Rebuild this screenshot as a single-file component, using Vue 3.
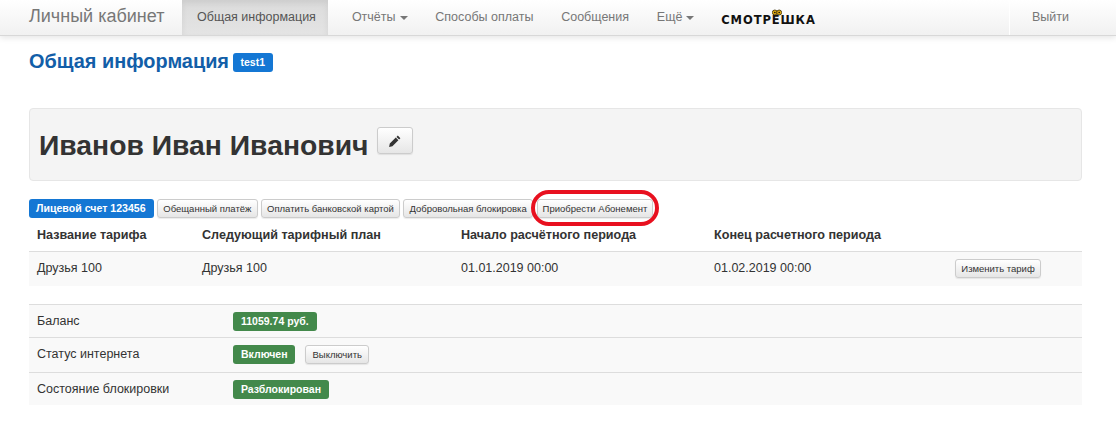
<script setup>
const tariffHead = ['Название тарифа', 'Следующий тарифный план', 'Начало расчётного периода', 'Конец расчетного периода', '']
const tariffRow = ['Друзья 100', 'Друзья 100', '01.01.2019 00:00', '01.02.2019 00:00']
const actions = ['Обещанный платёж', 'Оплатить банковской картой', 'Добровольная блокировка']
</script>

<template>
  <div class="page">
    <nav class="navbar">
      <a class="brand">Личный кабинет</a>
      <a class="nav-item active">Общая информация</a>
      <a class="nav-item">Отчёты <i class="caret"></i></a>
      <a class="nav-item">Способы оплаты</a>
      <a class="nav-item">Сообщения</a>
      <a class="nav-item">Ещё <i class="caret"></i></a>
      <a class="logo">СМОТР<span class="logo-o">Ё<svg class="eyes" width="10" height="7" viewBox="0 0 12 8"><circle cx="3.4" cy="4" r="3" fill="#e0ab12" stroke="#3a2c05"/><circle cx="8.6" cy="4" r="3" fill="#e0ab12" stroke="#3a2c05"/><circle cx="3.4" cy="4" r="1" fill="#111"/><circle cx="8.6" cy="4" r="1" fill="#111"/></svg></span>ШКА</a>
      <a class="logout">Выйти</a>
    </nav>

    <main class="content">
      <h2 class="title">Общая информация <span class="badge blue title-badge">test1</span></h2>

      <section class="jumbotron">
        <h1 class="name">Иванов Иван Иванович</h1>
        <button class="btn edit" aria-label="Изменить">
          <svg width="14" height="14" viewBox="0 0 14 14"><path d="M9.8 1.6l2.6 2.6-1.3 1.3-2.6-2.6zM7.8 3.6l2.6 2.6-6 6-3.3.7.7-3.3z" fill="#333"/></svg>
        </button>
      </section>

      <div class="actions">
        <span class="badge blue account">Лицевой счет 123456</span>
        <button v-for="a in actions" :key="a" class="btn small">{{ a }}</button>
        <span class="marked">
          <button class="btn small">Приобрести Абонемент</button>
          <span class="ring"></span>
        </span>
      </div>

      <div class="tariff head">
        <div v-for="(h, i) in tariffHead" :key="i" class="cell">{{ h }}</div>
      </div>
      <div class="tariff row">
        <div v-for="(c, i) in tariffRow" :key="i" class="cell">{{ c }}</div>
        <div class="cell"><button class="btn small change">Изменить тариф</button></div>
      </div>

      <div class="info">
        <div class="info-row">
          <div class="label">Баланс</div>
          <div class="value"><span class="badge green">11059.74 руб.</span></div>
        </div>
        <div class="info-row tall">
          <div class="label">Статус интернета</div>
          <div class="value"><span class="badge green">Включен</span><button class="btn small off">Выключить</button></div>
        </div>
        <div class="info-row">
          <div class="label">Состояние блокировки</div>
          <div class="value"><span class="badge green">Разблокирован</span></div>
        </div>
      </div>
    </main>
  </div>
</template>

<style>
html, body { margin: 0; background: #fff; }
</style>

<style scoped>
.page {
  width: 1116px;
  height: 437px;
  overflow: hidden;
  font-family: "Liberation Sans", Arial, sans-serif;
  font-size: 12.5px;
  color: #333;
  background: #fff;
}
.navbar {
  height: 35px;
  display: flex;
  align-items: stretch;
  background: linear-gradient(to bottom, #fff 0%, #f1f1f1 100%);
  border-bottom: 1px solid #d8d8d8;
  box-shadow: 0 2px 6px rgba(0, 0, 0, .1);
  padding: 0 34px 0 29px;
}
.navbar a { display: flex; align-items: center; color: #777; white-space: nowrap; padding-bottom: 2px; box-sizing: border-box; }
.navbar .brand { font-size: 18px; width: 153px; }
.navbar .nav-item { padding-left: 13.9px; padding-right: 13.9px; }
.navbar .nav-item.active {
  width: 146px;
  padding-left: 15px;
  padding-right: 0;
  margin-right: 10px;
  color: #555;
  background: linear-gradient(to bottom, #dbdbdb 0%, #e4e4e4 100%);
  box-shadow: inset 0 3px 6px rgba(0, 0, 0, .07);
}
.caret {
  display: inline-block;
  margin-left: 4px;
  margin-top: 2px;
  width: 0;
  height: 0;
  border-top: 4px solid #777;
  border-left: 4px solid transparent;
  border-right: 4px solid transparent;
}
.navbar .logo {
  margin-left: 13px;
  padding: 5px 0 0;
  font-family: "DejaVu Sans", sans-serif;
  font-weight: 700;
  font-size: 11.5px;
  letter-spacing: .9px;
  color: #111;
}
.logo-o { position: relative; }
.eyes { position: absolute; left: 0; top: -4px; }
.navbar .logout {
  margin-left: auto;
  width: 73px;
  padding-left: 22px;
  border-left: 1px solid #fff;
}
.content { padding: 0 34px 0 29px; }
.title {
  margin: 0;
  height: 72px;
  padding-top: 14px;
  box-sizing: border-box;
  font-size: 19.9px;
  line-height: 22px;
  font-weight: 700;
  color: #125ea8;
}
.badge {
  display: inline-block;
  box-sizing: border-box;
  height: 19px;
  line-height: 19px;
  padding: 0 8px;
  border-radius: 3px;
  font-size: 10.5px;
  font-weight: 700;
  color: #fff;
  white-space: nowrap;
}
.blue { background: #1477d4; }
.green { background: #43894b; }
.title-badge { margin-left: -2px; vertical-align: 2px; }
.jumbotron {
  height: 73px;
  box-sizing: border-box;
  background: #f4f4f4;
  border: 1px solid #e6e6e6;
  border-radius: 4px;
  padding: 18px 9px 0;
  display: flex;
  align-items: flex-start;
  gap: 9px;
}
.name {
  margin: 0;
  font-size: 28.3px;
  line-height: 36px;
  font-weight: 700;
  color: #333;
  white-space: nowrap;
}
.btn {
  font-family: inherit;
  color: #333;
  background: linear-gradient(to bottom, #fff 0%, #e6e6e6 100%);
  border: 1px solid #ccc;
  border-radius: 3px;
  box-shadow: inset 0 1px 0 rgba(255, 255, 255, .15), 0 1px 1px rgba(0, 0, 0, .08);
  padding: 0;
  cursor: pointer;
  white-space: nowrap;
}
.edit {
  width: 36px;
  height: 27px;
  display: flex;
  align-items: center;
  justify-content: center;
}
.small {
  height: 19px;
  padding: 0 5.3px;
  font-size: 9.5px;
  line-height: 17px;
}
.actions {
  margin-top: 18px;
  height: 21px;
  display: flex;
  align-items: flex-start;
  gap: 3px;
}
.account { padding: 0 7px; width: 125px; font-size: 10.6px; }
.marked { position: relative; display: block; margin-left: 1px; }
.marked .btn { display: block; padding: 0 4.5px; }
.ring {
  position: absolute;
  left: -6px;
  right: -6px;
  top: -9px;
  bottom: -8px;
  border: 4px solid #e8101f;
  border-radius: 18px;
  pointer-events: none;
}
.tariff {
  display: grid;
  grid-template-columns: 165px 259px 253px 241px 135px;
}
.cell { padding: 0 8px; }
.head {
  height: 33px;
  border-bottom: 1px solid #ddd;
  box-sizing: border-box;
  margin-top: -1px;
  line-height: 32px;
  font-weight: 700;
  font-size: 12.6px;
}
.row {
  height: 34px;
  background: #f9f9f9;
  line-height: 32px;
}
.change { margin-top: 7px; display: block; }
.info { margin-top: 18px; border-top: 1px solid #ddd; }
.info-row {
  display: flex;
  height: 33px;
  box-sizing: border-box;
  background: #f9f9f9;
  border-bottom: 1px solid #ddd;
}
.info-row.tall { height: 35px; }
.info-row:last-child { border-bottom: 0; height: 32px; }
.label { width: 204px; padding-left: 8px; line-height: 32px; box-sizing: border-box; }
.value { display: flex; align-items: flex-start; padding-top: 7px; }
.off { margin-left: 10px; padding: 0 6px; }
</style>
